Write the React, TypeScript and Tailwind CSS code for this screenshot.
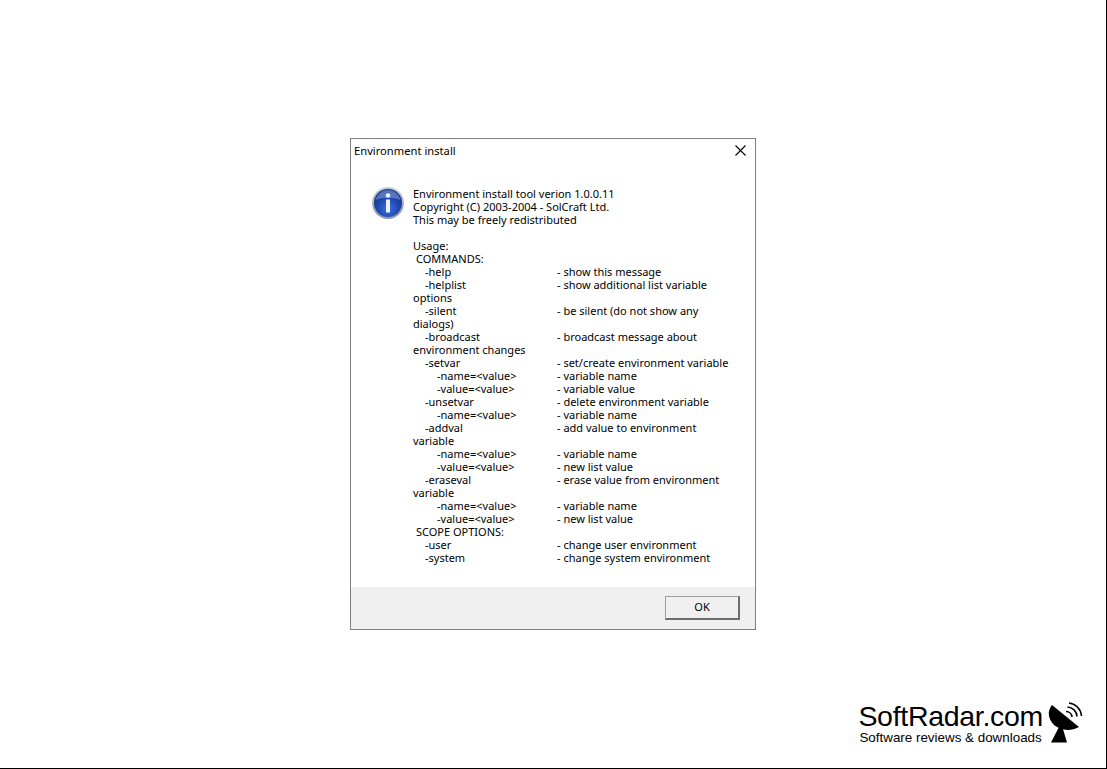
const font = { fontFamily: '"Noto Sans", sans-serif' };

type Row = [number, string, string?];
const head: Row[] = [
  [0, "Environment install tool verion 1.0.0.11"],
  [0, "Copyright (C) 2003-2004 - SolCraft Ltd."],
  [0, "This may be freely redistributed"],
  [0, "\u00a0"],
  [0, "Usage:"],
  [3, "COMMANDS:"],
  [12, "-help", "- show this message"],
  [12, "-helplist", "- show additional list variable"],
  [0, "options"],
  [12, "-silent", "- be silent (do not show any"],
  [0, "dialogs)"],
  [12, "-broadcast", "- broadcast message about"],
  [0, "environment changes"],
  [12, "-setvar", "- set/create environment variable"],
  [24, "-name=<value>", "- variable name"],
  [24, "-value=<value>", "- variable value"],
  [12, "-unsetvar", "- delete environment variable"],
  [24, "-name=<value>", "- variable name"],
  [12, "-addval", "- add value to environment"],
  [0, "variable"],
  [24, "-name=<value>", "- variable name"],
  [24, "-value=<value>", "- new list value"],
  [12, "-eraseval", "- erase value from environment"],
  [0, "variable"],
  [24, "-name=<value>", "- variable name"],
  [24, "-value=<value>", "- new list value"],
  [3, "SCOPE OPTIONS:"],
  [12, "-user", "- change user environment"],
  [12, "-system", "- change system environment"],
];

function InfoIcon() {
  return (
    <svg width="32" height="32" viewBox="0 0 32 32" className="shrink-0">
      <defs>
        <radialGradient id="b" cx="50%" cy="70%" r="65%">
          <stop offset="0%" stopColor="#3f74e0" />
          <stop offset="60%" stopColor="#1d45ad" />
          <stop offset="100%" stopColor="#17357f" />
        </radialGradient>
        <linearGradient id="r" x1="0" y1="0" x2="0" y2="1">
          <stop offset="0%" stopColor="#c4ccd8" />
          <stop offset="100%" stopColor="#8a95a8" />
        </linearGradient>
      </defs>
      <circle cx="16" cy="16" r="16" fill="url(#r)" />
      <circle cx="16" cy="16" r="14" fill="url(#b)" />
      <path d="M3.5 13C5.5 6 11 3 16 3S26.500 6 28.500 13C22 10 10 10 3.500 13Z" fill="#8fb0ea" opacity="0.5" />
      <circle cx="16" cy="8.500" r="2.300" fill="#eef3fb" />
      <path d="M14 12.500H18V25.500H14Z" fill="#eef3fb" />
    </svg>
  );
}

function Dish() {
  return (
    <svg width="36" height="41" viewBox="0 0 36 41" className="shrink-0">
      <path d="M4 3C-1 9 0 17 6 23C12 28 22 30 31 25Z" fill="#000" />
      <path d="M11 25L3 40.500H19L15 27Z" fill="#000" />
      <g fill="none" stroke="#000" strokeWidth="1.600">
        <path d="M18 9.500A6 6 0 0 1 24 15" />
        <path d="M19.500 5A10 10 0 0 1 29 14.500" />
        <path d="M21 1A14 14 0 0 1 33.500 14" />
      </g>
    </svg>
  );
}

export default function App() {
  return (
    <div
      style={font}
      className="relative h-[769px] w-[1107px] overflow-hidden border-r border-b border-black bg-white pt-[138px] pl-[350px] text-[11px] leading-[13px] text-black"
    >
      <div className="flex h-[492px] w-[406px] flex-col border border-[#7f7f7f] bg-white">
        <div className="flex h-[23px] items-center justify-between pl-[3px] pr-[9px]">
          <span className="text-[11.200px]">Environment install</span>
          <svg width="11" height="11" viewBox="0 0 11 11">
            <path d="M0.500 0.500L10.500 10.500M10.500 0.500L0.500 10.500" stroke="#000" strokeWidth="1.100" />
          </svg>
        </div>
        <div className="flex flex-1 pl-[21px] pt-[25px]">
          <InfoIcon />
          <div className="ml-[9px] w-[330px]">
            {head.map(([indent, a, b], i) => (
              <div key={i} className="flex h-[13px] whitespace-pre">
                <div className={b ? "w-[144px]" : ""} style={{ paddingLeft: indent }}>{a}</div>
                {b && <div>{b}</div>}
              </div>
            ))}
          </div>
        </div>
        <div className="flex h-[42px] items-start justify-end bg-[#f0f0f0] pr-[15px] pt-[9px]">
          <button className="flex h-[24px] w-[75px] items-center justify-center border-t border-l border-r-2 border-b-2 border-t-[#a0a0a0] border-l-[#a0a0a0] border-r-[#6d6d6d] border-b-[#6d6d6d] bg-[#f0f0f0] pb-[2px]">
            OK
          </button>
        </div>
      </div>
      <div className="absolute right-[22px] top-[702px] flex items-start gap-[5px]">
        <div className="text-black" style={{ fontFamily: '"Liberation Sans", sans-serif' }}>
          <div className="text-[28.500px] leading-[29px] tracking-[-0.3px]">SoftRadar.com</div>
          <div className="pl-[1px] text-[13.400px] leading-[14px]">Software reviews &amp; downloads</div>
        </div>
        <Dish />
      </div>
    </div>
  );
}
